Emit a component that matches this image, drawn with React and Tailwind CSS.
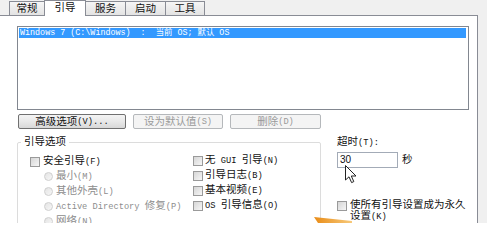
import React from "react";

// split text so latin runs get the narrower half-width size
const Mix = ({ s }) =>
  s
    .split(/([\x20-\x7e]+)/)
    .filter(Boolean)
    .map((p, i) =>
      /^[\x20-\x7e]+$/.test(p) ? (
        <span key={i} className="text-[0.83em]">
          {p}
        </span>
      ) : (
        <span key={i}>{p}</span>
      )
    );

const Check = () => (
  <div className="w-[10px] h-[10px] shrink-0 border border-[#9a9a9a] bg-gradient-to-br from-[#d6d6d6] to-[#f6f6f6]" />
);

const Radio = () => (
  <div className="w-[9px] h-[9px] shrink-0 rounded-full border border-[#cfcfcf] bg-gradient-to-br from-[#e4e4e4] to-[#f7f7f7]" />
);

const Tab = ({ label, active, className = "" }) => (
  <div
    className={
      active
        ? `relative z-10 -ml-px -mb-px h-[16px] bg-white border border-b-0 border-[#898c95] flex items-center justify-center pb-[2px] text-[#111] ${className}`
        : `-ml-px h-[14px] bg-gradient-to-b from-[#f5f5f5] to-[#e3e3e3] border border-b-0 border-[#898c95] flex items-center justify-center text-[#111] ${className}`
    }
  >
    {label}
  </div>
);

const Btn = ({ label, disabled, className = "" }) => (
  <div
    className={
      disabled
        ? `h-[15px] rounded-[2px] border border-[#b5b8bb] bg-[#f4f4f4] flex items-center justify-center text-[#9a9a9a] ${className}`
        : `h-[15px] rounded-[2px] border border-[#707070] bg-gradient-to-b from-[#f4f4f4] via-[#e8e8e8] to-[#d8d8d8] flex items-center justify-center text-[#111] ${className}`
    }
  >
    <Mix s={label} />
  </div>
);

export default function App() {
  const left = [
    { t: "安全引导(F)", kind: "check" },
    { t: "最小(M)", kind: "radio" },
    { t: "其他外壳(L)", kind: "radio" },
    { t: "Active Directory 修复(P)", kind: "radio" },
    { t: "网络(N)", kind: "radio" },
  ];
  const right = ["无 GUI 引导(N)", "引导日志(B)", "基本视频(E)", "OS 引导信息(O)"];

  return (
    <div className="relative w-[487px] h-[244px] bg-white overflow-hidden font-['Liberation_Mono','Noto_Sans_CJK_SC',monospace] text-[10.5px] leading-[14px]">
      <div className="h-[223px] bg-[#f0f0f0] overflow-hidden flex flex-col border-r border-[#f0f0f0]">
        {/* TABS */}
        <div className="h-[15px] flex items-end pl-[10px] shrink-0">
          <Tab label="常规" className="w-[36px]" />
          <Tab label="引导" active className="w-[42px]" />
          <Tab label="服务" className="w-[41px]" />
          <Tab label="启动" className="w-[41px]" />
          <Tab label="工具" className="w-[40px]" />
        </div>

        {/* PANEL */}
        <div className="-ml-px w-[479px] flex-1 bg-white border border-b-0 border-[#898c95] flex flex-col">
          {/* OS LIST */}
          <div className="mt-[10px] ml-[17px] w-[452px] h-[84px] shrink-0 border border-[#828790] p-px">
            <div className="h-[10px] mr-px bg-[#3399ff] text-white text-[8.4px] leading-[10px] pl-[1px] whitespace-pre">
              {"Windows 7 (C:\\Windows)  :  当前 OS; 默认 OS"}
            </div>
          </div>

          {/* BUTTONS */}
          <div className="mt-[4px] ml-[18px] flex gap-[7px] shrink-0">
            <Btn label="高级选项(V)..." className="w-[108px]" />
            <Btn label="设为默认值(S)" disabled className="w-[90px]" />
            <Btn label="删除(D)" disabled className="w-[91px]" />
          </div>

          {/* LOWER */}
          <div className="mt-[6px] flex items-start">
            <fieldset className="ml-[17px] w-[304px] h-[120px] shrink-0 border border-[#dcdcdc] rounded-[2px]">
              <legend className="ml-[3px] px-[3px] text-[#111]">引导选项</legend>
              <div className="grid grid-cols-[163px_1fr] pl-[12px] pt-[5px]">
                <div className="flex flex-col">
                  {left.map((r) =>
                    r.kind === "check" ? (
                      <div key={r.t} className="h-[15px] flex items-center gap-[3px] text-[#111]">
                        <Check />
                        <span>
                          <Mix s={r.t} />
                        </span>
                      </div>
                    ) : (
                      <div key={r.t} className="h-[15px] flex items-center gap-[3px] pl-[14px] text-[#8d8d8d] whitespace-nowrap">
                        <Radio />
                        <span>
                          <Mix s={r.t} />
                        </span>
                      </div>
                    )
                  )}
                </div>
                <div className="flex flex-col -mt-px">
                  {right.map((t) => (
                    <div key={t} className="h-[15px] flex items-center gap-[2px] text-[#111] whitespace-nowrap">
                      <Check />
                      <span>
                        <Mix s={t} />
                      </span>
                    </div>
                  ))}
                </div>
              </div>
            </fieldset>

            <div className="ml-[16px] flex flex-col text-[#111]">
              <div>
                <Mix s="超时(T):" />
              </div>
              <div className="mt-[2px] flex items-center gap-[4px]">
                <div className="w-[61px] h-[16px] border border-[#a3abb7] bg-white pl-[2px] flex items-center font-['Liberation_Sans',sans-serif] text-[10px]">
                  30
                </div>
                <span>秒</span>
              </div>
              <div className="mt-[32px] flex items-start gap-[3px] leading-[11px]">
                <div className="mt-px">
                  <Check />
                </div>
                <div className="w-[120px]">
                  <Mix s="使所有引导设置成为永久设置(K)" />
                </div>
              </div>
            </div>
          </div>
        </div>
      </div>

      {/* mouse pointer */}
      <svg className="absolute left-[345px] top-[165px]" width="13" height="19" viewBox="0 0 13 19">
        <path d="M0.5 0.5 L0.5 15 L4 11.8 L6.6 17.6 L8.8 16.6 L6.3 11 L11 11 Z" fill="#fff" stroke="#222" strokeWidth="1" strokeLinejoin="round" />
      </svg>

      {/* orange annotation arrow edge */}
      <svg className="absolute left-[312px] top-[214px]" width="44" height="10" viewBox="0 0 44 10">
        <defs>
          <linearGradient id="og" x1="0" x2="1" y1="0" y2="0">
            <stop offset="0" stopColor="#e98c17" />
            <stop offset="1" stopColor="#f7c97a" />
          </linearGradient>
        </defs>
        <polygon points="2,3 40,7 40,9 6,9" fill="url(#og)" />
      </svg>
    </div>
  );
}
